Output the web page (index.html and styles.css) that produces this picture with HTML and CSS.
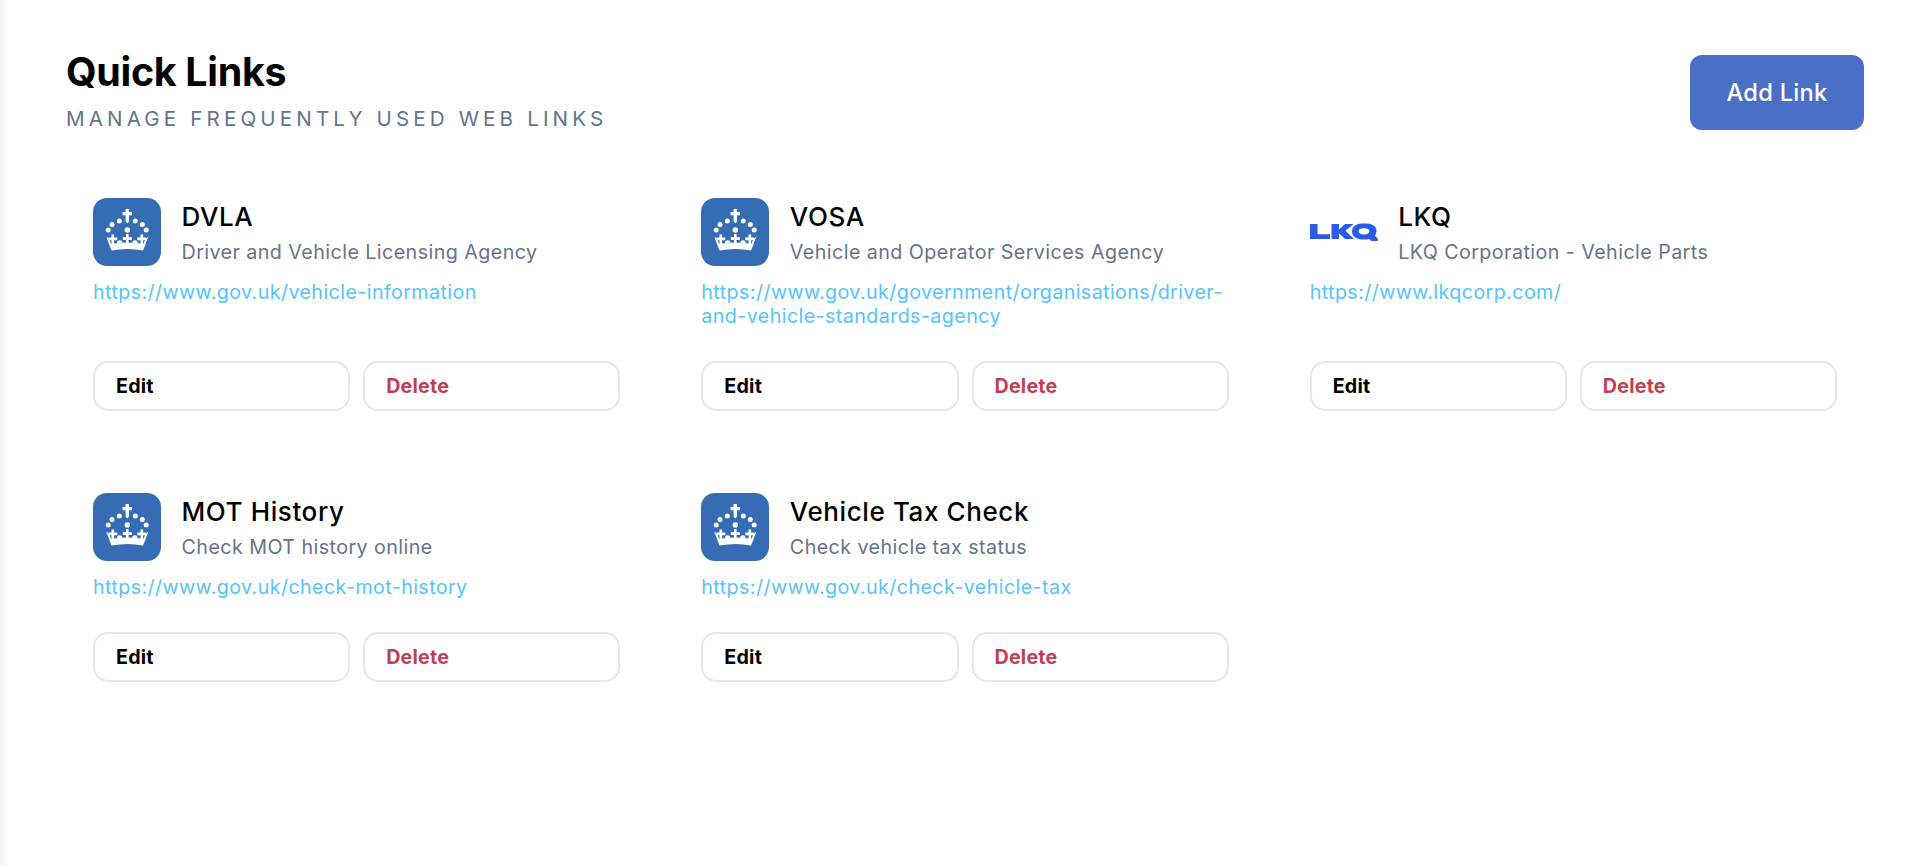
FILE: index.html
```html
<!DOCTYPE html>
<html lang="en">
<head>
<meta charset="utf-8">
<title>Quick Links</title>
<link rel="stylesheet" href="styles.css">
</head>
<body>
<svg class="defs" width="0" height="0" aria-hidden="true">
  <symbol id="crown" viewBox="0 0 68 68">
    <g fill="#fff">
      <path d="M32.600 11h3.400v3h3v3.200h-3v6.300l-1.700 2-1.700-2v-6.300h-3V14h3z"/>
      <circle cx="26.300" cy="23" r="2.500"/><circle cx="42.300" cy="23" r="2.500"/>
      <circle cx="19" cy="26.500" r="2.500"/><circle cx="49.300" cy="26.500" r="2.500"/>
      <circle cx="15.200" cy="32" r="2.500"/><circle cx="53.200" cy="32" r="2.500"/>
      <circle cx="34.300" cy="32" r="2.700"/>
      <path d="M33 36h2.600v3.200h3.200v2.700h-3.200V45H33v-3.100h-3.200v-2.700H33z"/>
      <path d="M18.500 36.500h2.600v3h3.200v2.700h-3.200V46h-2.600v-3.800h-3v-2.700h3z"/>
      <path d="M47.500 36.500h2.600v3h3v2.700h-3V46h-2.600v-3.800h-3.200v-2.700h3.200z"/>
      <path d="M13.200 38.500l3 2.500 2 5-2 .4z"/><path d="M55.400 38.500l-3 2.500-2 5 2 .4z"/>
      <path d="M24 45.500q-.3-3 2.700-3.200 2.300 0 3 2.300zM44.600 45.500q.3-3-2.700-3.200-2.300 0-3 2.300z"/>
      <path d="M16 46.200q18.300-3.600 36.600 0l-2.600 6.300q-15.700-3-31.400 0z"/>
    </g>
  </symbol>
</svg>
<div class="edge"></div>
<main class="page">
  <header class="head">
    <div>
      <h1 class="title">Quick Links</h1>
      <p class="subtitle">Manage frequently used web links</p>
    </div>
    <button class="add">Add Link</button>
  </header>
  <section class="grid">
    <article class="card">
      <div class="top">
        <svg class="logo"><use href="#crown"/></svg>
        <div class="info"><h2 class="name">DVLA</h2><p class="desc">Driver and Vehicle Licensing Agency</p></div>
      </div>
      <a class="url" href="#">https://www.gov.uk/vehicle-information</a>
      <div class="actions"><button class="btn">Edit</button><button class="btn del">Delete</button></div>
    </article>
    <article class="card">
      <div class="top">
        <svg class="logo"><use href="#crown"/></svg>
        <div class="info"><h2 class="name">VOSA</h2><p class="desc">Vehicle and Operator Services Agency</p></div>
      </div>
      <a class="url" href="#">https://www.gov.uk/government/organisations/driver-and-vehicle-standards-agency</a>
      <div class="actions"><button class="btn">Edit</button><button class="btn del">Delete</button></div>
    </article>
    <article class="card">
      <div class="top">
        <svg class="logo plain" viewBox="0 0 68 68">
          <g fill="#2b5ce6">
            <path d="M0 26h7.500v10.300H20V41H0z"/>
            <path d="M21.500 26H29v5.500l6-5.500h8.500l-8 6.800 8.500 8.200h-9l-6-5.800V41h-7.500z"/>
            <path fill-rule="evenodd" d="M54 25.200q12.500 0 12.500 8 0 2.700-1.700 4.500l3 2.800V43h-6.500l-2.300-2q-2 .6-4.500.6-12.500-.3-12.500-8.400 0-7.700 12.500-8zm0 5q-5.300.1-5.500 3 .2 3.100 5.500 3.200 5.300-.1 5.500-3.200-.2-2.900-5.500-3z"/>
          </g>
        </svg>
        <div class="info"><h2 class="name">LKQ</h2><p class="desc">LKQ Corporation - Vehicle Parts</p></div>
      </div>
      <a class="url" href="#">https://www.lkqcorp.com/</a>
      <div class="actions"><button class="btn">Edit</button><button class="btn del">Delete</button></div>
    </article>
    <article class="card">
      <div class="top">
        <svg class="logo"><use href="#crown"/></svg>
        <div class="info"><h2 class="name">MOT History</h2><p class="desc">Check MOT history online</p></div>
      </div>
      <a class="url" href="#">https://www.gov.uk/check-mot-history</a>
      <div class="actions"><button class="btn">Edit</button><button class="btn del">Delete</button></div>
    </article>
    <article class="card">
      <div class="top">
        <svg class="logo"><use href="#crown"/></svg>
        <div class="info"><h2 class="name">Vehicle Tax Check</h2><p class="desc">Check vehicle tax status</p></div>
      </div>
      <a class="url" href="#">https://www.gov.uk/check-vehicle-tax</a>
      <div class="actions"><button class="btn">Edit</button><button class="btn del">Delete</button></div>
    </article>
  </section>
</main>
</body>
</html>
```
FILE: styles.css
```css
* { box-sizing: border-box; }
html, body { margin: 0; height: 100%; }
body { background: #fff; font-family: Inter, "Noto Sans", sans-serif; color: #000; overflow: hidden; }
.defs { position: absolute; }
.edge { position: fixed; left: 0; top: 0; bottom: 0; width: 8px; background: linear-gradient(to right, #f2f2f3, #fff); }
.page { padding: 48px 64px 0 66px; }
.head { display: flex; justify-content: space-between; align-items: flex-start; height: 123px; }
.title { margin: 0; font-size: 39.400px; line-height: 48px; font-weight: 700; letter-spacing: -0.3px; }
.subtitle { margin: 10px 0 0; font-size: 20.600px; line-height: 25px; color: #64748b; text-transform: uppercase; letter-spacing: 4.130px; }
.add { margin-top: 7px; width: 174px; height: 75px; border: 0; border-radius: 12px; background: #4a6fc7; color: #fff; font: 500 23.600px Inter, sans-serif; letter-spacing: 0.3px; }
.grid { display: grid; grid-template-columns: repeat(3, 1fr); gap: 28px 27px; }
.card { padding: 27px; display: flex; flex-direction: column; }
.top { display: flex; gap: 20.500px; height: 68px; }
.logo { flex: none; width: 68px; height: 68px; background: #366cb4; border-radius: 14px; }
.logo.plain { background: none; border-radius: 0; }
.name { margin: 2px 0 0; font-size: 26px; line-height: 34px; font-weight: 500; letter-spacing: 0.6px; }
.desc { margin: 4.500px 0 0; font-size: 19.700px; line-height: 26px; color: #64748b; letter-spacing: 0.43px; }
.url { display: block; margin-top: 14px; font-size: 19.700px; line-height: 24px; color: #56c5fa; text-decoration: none; letter-spacing: 0.4px; }
.actions { display: flex; gap: 13px; margin-top: auto; padding-top: 32.500px; }
.btn { flex: 1; height: 50.500px; padding: 0 21px; text-align: left; background: #fff; border: 2px solid #e2e8f0; border-radius: 15px; color: #000; font: 700 19.700px Inter, sans-serif; letter-spacing: 0.2px; }
.del { color: #bf3f56; }
```
